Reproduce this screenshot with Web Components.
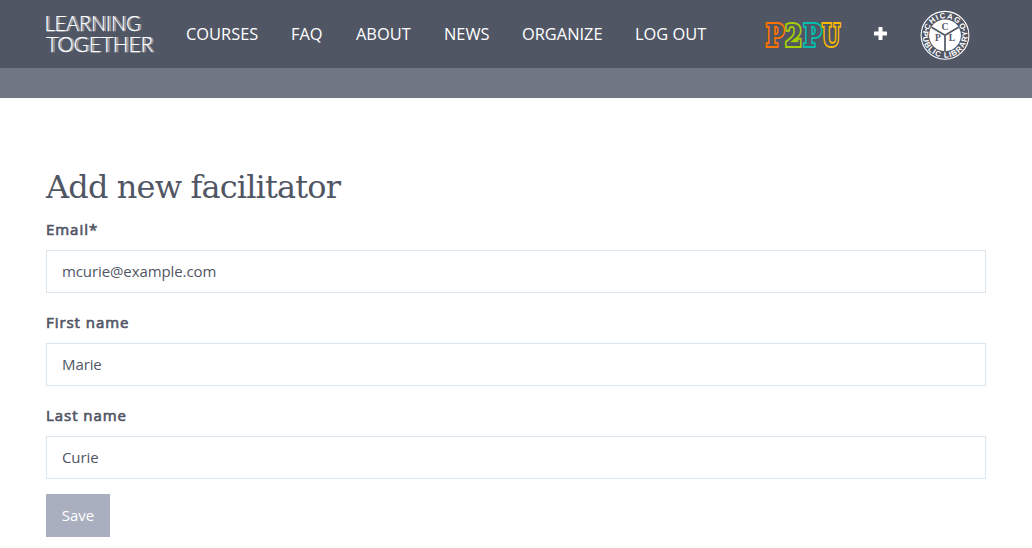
<!DOCTYPE html>
<html lang="en">
<head>
<meta charset="utf-8">
<title>Add new facilitator</title>
<style>
body{margin:0;background:#fff;color:#515665;font:15px/23px "Open Sans",sans-serif}
</style>
</head>
<body>
<site-header>
  <nav-link style="width:72px">COURSES</nav-link>
  <nav-link style="width:32px">FAQ</nav-link>
  <nav-link style="width:55px">ABOUT</nav-link>
  <nav-link style="width:45px">NEWS</nav-link>
  <nav-link style="width:80px">ORGANIZE</nav-link>
  <nav-link style="width:72px">LOG OUT</nav-link>
</site-header>
<facilitator-form>
  <form-field label="Email*" value="mcurie@example.com"></form-field>
  <form-field label="First name" value="Marie"></form-field>
  <form-field label="Last name" value="Curie"></form-field>
  <save-button>Save</save-button>
</facilitator-form>
<script>
function define(name, html, after) {
  customElements.define(name, class extends HTMLElement {
    connectedCallback() {
      if (this.shadowRoot) return;
      this.attachShadow({mode: 'open'}).innerHTML = html;
      if (after) after(this);
    }
  });
}
define('learning-logo', `<style>:host{display:block;width:110px;height:40px}svg{display:block;overflow:visible}
text{font:300 21.500px Lato,sans-serif;fill:#fff;stroke:#fff;stroke-width:.25;text-shadow:2px 0 0 rgba(255,255,255,.4)}</style>
<svg width="110" height="40"><text x="-1.500" y="17.300" textLength="96" lengthAdjust="spacingAndGlyphs">LEARNING</text>
<text x="0" y="38" textLength="107" lengthAdjust="spacingAndGlyphs">TOGETHER</text></svg>`);
define('p2pu-logo', `<style>:host{display:block;width:76px;height:26px}svg{display:block;overflow:visible}
text{font:bold 30px "DejaVu Serif",serif;fill:#515665;stroke-width:4;stroke-linejoin:miter;paint-order:stroke}</style>
<svg width="76" height="26"><text x="1" y="23.500" textLength="18" lengthAdjust="spacingAndGlyphs" stroke="#ff7200">P</text><text x="20" y="23.500" textLength="17" lengthAdjust="spacingAndGlyphs" stroke="#a5cf00">2</text><text x="38.500" y="23.500" textLength="18" lengthAdjust="spacingAndGlyphs" stroke="#00bfae">P</text><text x="57" y="23.500" textLength="18" lengthAdjust="spacingAndGlyphs" stroke="#fbb800">U</text></svg>`);
define('plus-icon', `<style>:host{display:block;width:13px;height:13px}svg{display:block}</style>
<svg width="13" height="13"><path d="M5 0h3q.5 0 .5.5V4.500H12.500q.5 0 .5.5V8q0 .5-.5.5H8.500v4q0 .5-.5.5H5q-.5 0-.5-.5v-4H.5Q0 8.500 0 8V5q0-.5.5-.5h4V.5Q4.500 0 5 0Z" fill="#fff"/></svg>`);
define('library-seal', `<style>:host{display:block;width:50px;height:50px}svg{display:block}
.r{font:bold 7.800px "Liberation Sans",sans-serif;fill:#fff}.c{font:bold 9.500px "Liberation Serif",serif;fill:#515665;text-anchor:middle}</style>
<svg width="50" height="50" viewBox="-25 -25.300 50 50"><defs><path id="top" d="M-17 0A17 17 0 0 1 17 0"/><path id="bottom" d="M-22 -4A22.360 22.360 0 1 0 22 -4"/></defs>
<circle r="23.900" fill="none" stroke="#fff" stroke-width="1.100"/>
<circle r="15.900" fill="#fff"/>
<path d="M0 0V16M0 0L-13.500 -8M0 0L13.500 -8" stroke="#515665" stroke-width="1.700"/>
<text class="r"><textPath href="#top" startOffset="50%" text-anchor="middle" textLength="43">CHICAGO</textPath></text>
<text class="r"><textPath href="#bottom" startOffset="50%" text-anchor="middle" textLength="79">PUBLIC LIBRARY</textPath></text>
<circle cx="-19" cy="-5.500" r=".9" fill="#fff"/><circle cx="19" cy="-5.500" r=".9" fill="#fff"/>
<text class="c" x="0" y="-5">C</text><text class="c" x="-7" y="6">P</text><text class="c" x="7" y="6">L</text></svg>`);
define('nav-link', `<style>:host{display:block;white-space:nowrap;color:#fff;font-size:16.400px;line-height:24px}</style><slot></slot>`);
define('site-header', `<style>:host{display:block}
header{display:flex;align-items:flex-start;height:68px;background:#515665;box-sizing:border-box;padding-left:46px}
learning-logo{margin-top:14px}nav{display:flex;gap:33px;margin:22px 0 0 30px}
p2pu-logo{margin:22px 0 0 58px}plus-icon{margin:27px 0 0 33px}library-seal{margin:10px 0 0 33px}
.band{height:30px;background:#707682}</style>
<header><learning-logo></learning-logo><nav><slot></slot></nav><p2pu-logo></p2pu-logo><plus-icon></plus-icon><library-seal></library-seal></header><div class="band"></div>`);
define('form-field', `<style>:host{display:block;margin-bottom:18px}:host(:last-of-type){margin-bottom:15px}
label{display:block;-webkit-text-stroke:.65px currentColor;letter-spacing:.95px;line-height:23px;margin-bottom:9px}
input{display:block;box-sizing:border-box;width:100%;height:43px;border:1px solid #dce6ee;border-radius:0;background:#fff;padding:0 15px 2px;color:#515665;font:15px "Open Sans",sans-serif;letter-spacing:-.1px;outline:0}</style>
<label for="f"></label><input id="f">`, el => {
  el.shadowRoot.querySelector('label').textContent = el.getAttribute('label');
  el.shadowRoot.querySelector('input').value = el.getAttribute('value');
});
define('save-button', `<style>:host{display:block}button{display:block;width:64px;height:43px;padding:0 0 2px;border:0;background:#a9afbf;color:#fff;font:15px "Open Sans",sans-serif}</style><button><slot></slot></button>`);
define('facilitator-form', `<style>:host{display:block;padding:69px 46px 0}
h1{margin:0 0 11px;height:40px;font:400 32px/40px "DejaVu Serif",serif;letter-spacing:-.850px;white-space:nowrap}</style><h1>Add new facilitator</h1><slot></slot>`);
</script>
</body>
</html>
